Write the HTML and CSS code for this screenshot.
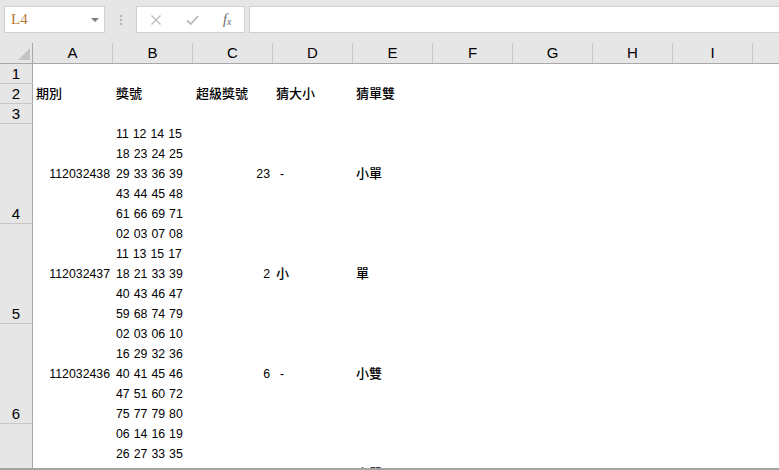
FILE: index.html
```html
<!DOCTYPE html>
<html lang="zh-Hant">
<head>
  <meta charset="UTF-8">
  <link rel="stylesheet" href="styles.css">
</head>
<body>
  <div class="toolbar">
    <div class="namebox"><span class="ref">L4</span><span class="caret"></span></div>
    <div class="grip"><i></i><i></i><i></i></div>
    <div class="fxbox">
      <svg width="12" height="12" viewBox="0 0 12 12"><path d="M1.5 1.5 L10.5 10.5 M10.5 1.5 L1.5 10.5" stroke="#bcbcbc" stroke-width="1.3" fill="none"/></svg>
      <svg width="13" height="12" viewBox="0 0 13 12"><path d="M1 6.5 L4.8 10 L12 2" stroke="#bcbcbc" stroke-width="1.8" fill="none"/></svg>
      <span class="fx">f<sub>x</sub></span>
    </div>
    <div class="formula"></div>
  </div>

  <div class="sheet">
    <div class="row head">
      <div class="corner"><span class="tri"></span></div>
      <div class="col">A</div>
      <div class="col">B</div>
      <div class="col">C</div>
      <div class="col">D</div>
      <div class="col">E</div>
      <div class="col">F</div>
      <div class="col">G</div>
      <div class="col">H</div>
      <div class="col">I</div>
      <div class="col last"></div>
    </div>

    <div class="row r20"><div class="num">1</div></div>
    <div class="row r20">
      <div class="num">2</div>
      <div class="cell zh">期別</div>
      <div class="cell zh">獎號</div>
      <div class="cell zh">超級獎號</div>
      <div class="cell zh">猜大小</div>
      <div class="cell zh">猜單雙</div>
    </div>
    <div class="row r20"><div class="num">3</div></div>

    <div class="row r100">
      <div class="num">4</div>
      <div class="cell mid right">112032438</div>
      <div class="cell balls">11 12 14 15<br>18 23 24 25<br>29 33 36 39<br>43 44 45 48<br>61 66 69 71</div>
      <div class="cell mid right">23</div>
      <div class="cell mid dash">-</div>
      <div class="cell mid zh">小單</div>
    </div>

    <div class="row r100">
      <div class="num">5</div>
      <div class="cell mid right">112032437</div>
      <div class="cell balls">02 03 07 08<br>11 13 15 17<br>18 21 33 39<br>40 43 46 47<br>59 68 74 79</div>
      <div class="cell mid right">2</div>
      <div class="cell mid zh">小</div>
      <div class="cell mid zh">單</div>
    </div>

    <div class="row r100">
      <div class="num">6</div>
      <div class="cell mid right">112032436</div>
      <div class="cell balls">02 03 06 10<br>16 29 32 36<br>40 41 45 46<br>47 51 60 72<br>75 77 79 80</div>
      <div class="cell mid right">6</div>
      <div class="cell mid dash">-</div>
      <div class="cell mid zh">小雙</div>
    </div>

    <div class="row r100">
      <div class="num"></div>
      <div class="cell mid right">112032435</div>
      <div class="cell balls">06 14 16 19<br>26 27 33 35<br>36 38 51 53</div>
      <div class="cell mid right">22</div>
      <div class="cell mid dash">-</div>
      <div class="cell mid zh">小單</div>
    </div>
  </div>
</body>
</html>
```

FILE: styles.css
```css
* { box-sizing: border-box; margin: 0; padding: 0; }
body {
  width: 779px;
  height: 470px;
  overflow: hidden;
  background: #fff;
  color: #000;
  font-family: "Liberation Sans", "Noto Sans CJK TC", sans-serif;
}

/* formula bar */
.toolbar { height: 43px; background: #e6e6e6; display: flex; align-items: flex-start; padding: 6px 0 0 4px; }
.namebox {
  width: 101px; height: 27px;
  background: #fff; border: 1px solid #cfcfcf;
  display: flex; align-items: center; justify-content: space-between;
  padding: 0 5px 0 6px;
}
.ref { font-family: "Liberation Serif", serif; font-size: 15px; color: #b8782e; }
.caret { border-left: 4px solid transparent; border-right: 4px solid transparent; border-top: 4px solid #7d7d7d; }
.grip { width: 31px; height: 27px; display: flex; flex-direction: column; align-items: center; justify-content: center; gap: 2px; }
.grip i { width: 2px; height: 2px; background: #b3b3b3; }
.fxbox {
  width: 109px; height: 27px;
  background: #fff; border: 1px solid #cfcfcf;
  display: flex; align-items: center; gap: 24px;
  padding-left: 13px;
}
.fx { font-family: "Liberation Serif", serif; font-style: italic; font-size: 14px; color: #666; line-height: 1; }
.fx sub { font-size: 10px; vertical-align: -1px; }
.formula { flex: 1; height: 27px; margin-left: 4px; background: #fff; border: 1px solid #cfcfcf; border-right: none; }

/* grid */
.sheet { height: 427px; overflow: hidden; border-bottom: 2px solid #a3a3a3; }
.row { display: grid; grid-template-columns: 33px repeat(9, 80px) 1fr; }
.r20 { height: 20px; }
.r100 { height: 100px; }

.head { height: 21px; background: #e6e6e6; border-bottom: 1px solid #a8a8a8; }
.corner { border-right: 1px solid #a8a8a8; position: relative; }
.tri {
  position: absolute; right: 2px; bottom: 3px;
  border-left: 12px solid transparent;
  border-bottom: 12px solid #c4c4c4;
}
.col { font-size: 15px; line-height: 20px; text-align: center; border-right: 1px solid #c8c8c8; }
.col.last { border-right: none; }

.num {
  background: #e6e6e6;
  border-right: 1px solid #a8a8a8;
  border-bottom: 1px solid #c8c8c8;
  font-size: 15px; line-height: 19px;
  display: flex; align-items: flex-end; justify-content: center;
}

.cell { padding: 0 3px; font-size: 12.3px; line-height: 20px; white-space: nowrap; }
.mid { display: flex; align-items: center; }
.right { justify-content: flex-end; }
.balls { word-spacing: 0.6px; }
.dash { padding-left: 7px; }
.zh { font-size: 13px; font-weight: 500; }
```
